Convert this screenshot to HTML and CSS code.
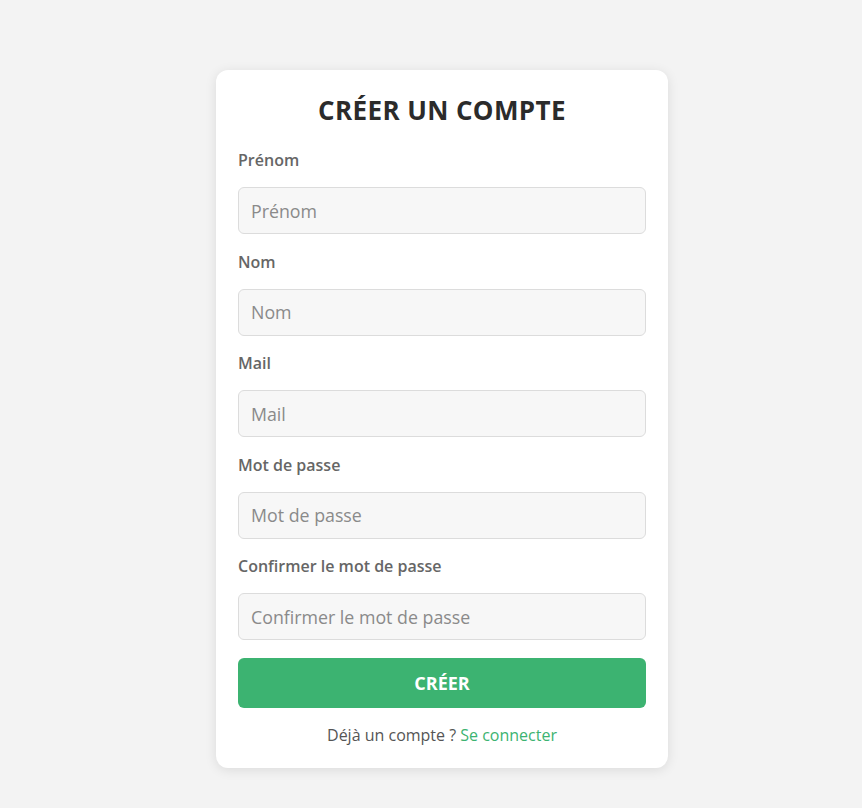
FILE: index.html
```html
<!DOCTYPE html>
<html lang="fr">
<head>
<meta charset="utf-8">
<title>Créer un compte</title>
<link rel="stylesheet" href="styles.css">
</head>
<body>
<main class="page">
  <form class="card">
    <h1 class="title">CRÉER UN COMPTE</h1>
    <div class="field">
      <label class="label">Prénom</label>
      <input class="input" type="text" placeholder="Prénom">
    </div>
    <div class="field">
      <label class="label">Nom</label>
      <input class="input" type="text" placeholder="Nom">
    </div>
    <div class="field">
      <label class="label">Mail</label>
      <input class="input" type="email" placeholder="Mail">
    </div>
    <div class="field">
      <label class="label">Mot de passe</label>
      <input class="input" type="password" placeholder="Mot de passe">
    </div>
    <div class="field">
      <label class="label">Confirmer le mot de passe</label>
      <input class="input" type="password" placeholder="Confirmer le mot de passe">
    </div>
    <button class="btn" type="button">CRÉER</button>
    <p class="footer">Déjà un compte ? <a class="link" href="#">Se connecter</a></p>
  </form>
</main>
</body>
</html>
```
FILE: styles.css
```css
* { box-sizing: border-box; }
html, body { margin: 0; padding: 0; }
body {
  background: #f3f3f3;
  font-family: "Open Sans", "Noto Sans", sans-serif;
  color: #333;
}
.page {
  display: flex;
  justify-content: center;
  padding: 70px 0 0 22px;
  min-height: 808px;
}
.card {
  width: 452px;
  height: 698px;
  background: #fff;
  border-radius: 12px;
  box-shadow: 0 2px 12px rgba(0,0,0,0.10);
  padding: 22px 22px;
  display: flex;
  flex-direction: column;
}
.title {
  margin: 0 0 22px;
  text-align: center;
  font-size: 26px;
  line-height: 36px;
  font-weight: 700;
  letter-spacing: 0.4px;
  color: #2b2b2b;
}
.field {
  display: flex;
  flex-direction: column;
  margin-bottom: 17.5px;
}
.label {
  font-size: 16px;
  line-height: 20px;
  font-weight: 600;
  color: #666;
  margin-bottom: 17px;
}
.input {
  height: 47px;
  border: 1px solid #dcdcdc;
  border-radius: 6px;
  background: #f7f7f7;
  padding: 0 12px;
  font-family: inherit;
  font-size: 17.8px;
  color: #333;
  outline: none;
}
.input::placeholder { color: #8a8a8a; }
.btn {
  height: 50px;
  border: none;
  border-radius: 6px;
  background: #3cb371;
  color: #fff;
  font-family: inherit;
  font-size: 18px;
  font-weight: 700;
}
.footer {
  margin: 17px 0 0;
  text-align: center;
  font-size: 16px;
  line-height: 20px;
  color: #555;
}
.link { color: #3cb371; text-decoration: none; }
```
